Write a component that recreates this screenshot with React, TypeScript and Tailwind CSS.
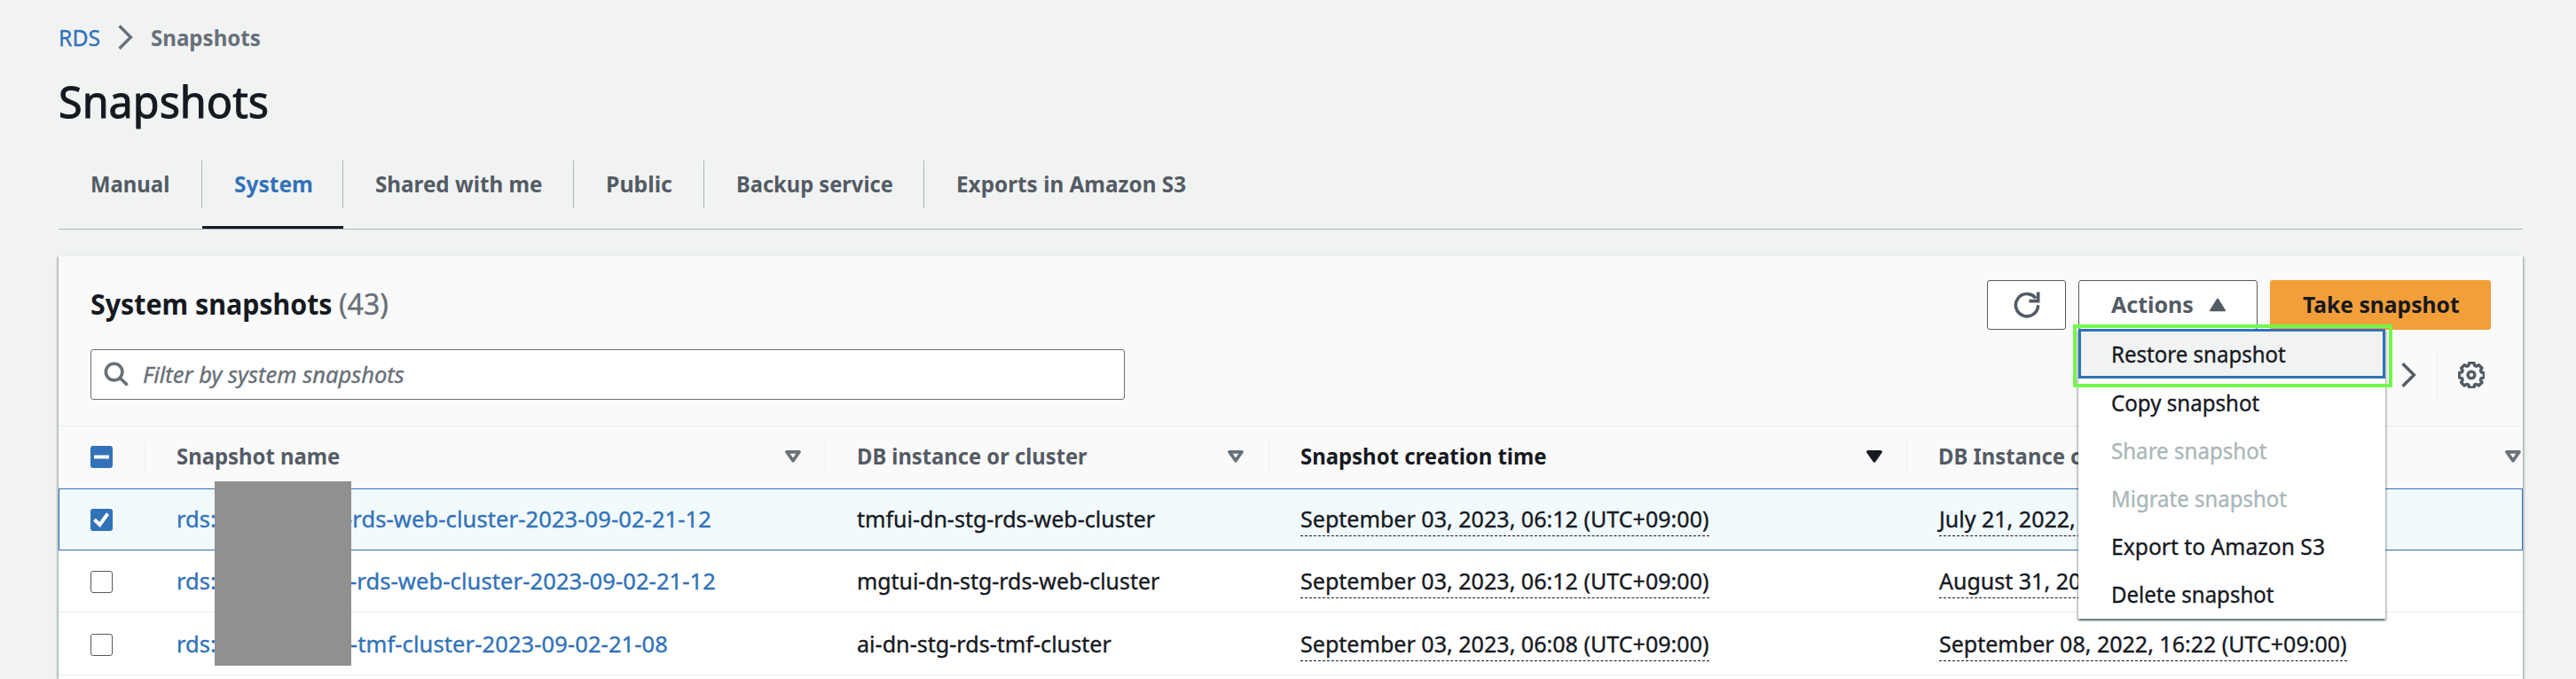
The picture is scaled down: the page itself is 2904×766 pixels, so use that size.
import React from "react";

const columns = [
  { title: "Snapshot name", scale: "scale-x-[0.936]", pad: "pr-[26px]", sorted: false },
  { title: "DB instance or cluster", scale: "scale-x-[0.931]", pad: "pr-[27px]", sorted: false },
  { title: "Snapshot creation time", scale: "scale-x-[0.937]", pad: "pr-[26px]", sorted: true },
  { title: "DB Instance c", scale: "scale-x-[0.935]", pad: "pr-[1px]", sorted: false },
];

const rows = [
  {
    selected: true,
    prefix: "rds:t",
    suffix: "-rds-web-cluster-2023-09-02-21-12",
    suffixWidth: "w-[603px]",
    cluster: "tmfui-dn-stg-rds-web-cluster",
    clusterScale: "scale-x-[0.981]",
    snapshotTime: "September 03, 2023, 06:12 (UTC+09:00)",
    createdTime: "July 21, 2022,",
    createdWidth: "w-[390px]",
    height: "h-[70px]",
  },
  {
    selected: false,
    prefix: "rds:",
    suffix: "-rds-web-cluster-2023-09-02-21-12",
    suffixWidth: "w-[608px]",
    cluster: "mgtui-dn-stg-rds-web-cluster",
    clusterScale: "scale-x-[0.976]",
    snapshotTime: "September 03, 2023, 06:12 (UTC+09:00)",
    createdTime: "August 31, 20",
    createdWidth: "w-[420px]",
    height: "h-[70px] pt-px",
  },
  {
    selected: false,
    prefix: "rds:a",
    suffix: "-tmf-cluster-2023-09-02-21-08",
    suffixWidth: "w-[554px]",
    cluster: "ai-dn-stg-rds-tmf-cluster",
    clusterScale: "scale-x-[0.985]",
    snapshotTime: "September 03, 2023, 06:08 (UTC+09:00)",
    createdTime: "September 08, 2022, 16:22 (UTC+09:00)",
    createdWidth: "w-[460px]",
    height: "h-[71px] pt-[2px]",
  },
];

const tabs = [
  { label: "Manual", width: "w-[162px]", scale: "scale-x-[0.936]" },
  { label: "System", width: "w-[159px]", scale: "scale-x-[0.96]" },
  { label: "Shared with me", width: "w-[260px]", scale: "scale-x-[0.949]" },
  { label: "Public", width: "w-[147px]", scale: "scale-x-[0.974]" },
  { label: "Backup service", width: "w-[248px]", scale: "scale-x-[0.928]" },
  { label: "Exports in Amazon S3", width: "w-[330px]", scale: "scale-x-[0.953]" },
];

const menuItems = [
  { label: "Copy snapshot", scale: "scale-x-[0.945]", disabled: false },
  { label: "Share snapshot", scale: "scale-x-[0.945]", disabled: true },
  { label: "Migrate snapshot", scale: "scale-x-[0.94]", disabled: true },
  { label: "Export to Amazon S3", scale: "scale-x-[0.967]", disabled: false },
  { label: "Delete snapshot", scale: "scale-x-[0.942]", disabled: false },
];

function Chevron({ className = "" }: { className?: string }) {
  return (
    <svg className={`h-[28px] w-[17px] shrink-0 ${className}`} viewBox="0 0 17 28" fill="none" stroke="currentColor" strokeWidth="3.4">
      <path d="M1.6 1.2 14.4 14 1.6 26.8" />
    </svg>
  );
}

function SortIcon({ filled }: { filled: boolean }) {
  return (
    <svg
      className={`h-[16px] w-[20px] shrink-0 ${filled ? "text-[#16191f]" : "text-[#687078]"}`}
      viewBox="0 0 20 16"
      fill={filled ? "currentColor" : "none"}
      stroke="currentColor"
      strokeWidth="3.7"
      strokeLinejoin="round"
    >
      <path d="M3 2.800h14L10 12.800z" />
    </svg>
  );
}

function Checkbox({ state }: { state: "none" | "checked" | "mixed" }) {
  if (state === "none") {
    return <div className="h-[25px] w-[25px] rounded-[3px] border border-[#545b64] bg-white" />;
  }
  return (
    <div className="h-[25px] w-[25px] rounded-[3px] bg-[#3172b9]">
      <svg className="h-full w-full" viewBox="0 0 25 25" fill="none" stroke="white" strokeWidth="4">
        {state === "mixed" ? <path d="M4 12.500h17" /> : <path d="M4.500 12.300 10.500 18 19.500 5.500" />}
      </svg>
    </div>
  );
}

function ActionsMenu() {
  return (
    <div className="absolute top-[55px] left-0 z-10 w-[346px] bg-white pb-[1px] shadow-[0_2px_2px_0_rgba(0,28,36,0.5),2px_2px_2px_0_rgba(0,28,36,0.15),-2px_2px_2px_0_rgba(0,28,36,0.15)]">
      <div className="flex h-[56px] items-center border-[3px] border-[#3172b9] bg-[#f1f3f3] pb-px pl-[34px]">
        <span className="origin-left scale-x-[0.943] whitespace-nowrap">Restore snapshot</span>
      </div>
      <div>
        {menuItems.map((item) => (
          <div key={item.label} className={`flex h-[54px] items-center pb-px pl-[37px] ${item.disabled ? "text-[#aab7b8]" : ""}`}>
            <span className={`origin-left whitespace-nowrap ${item.scale}`}>{item.label}</span>
          </div>
        ))}
      </div>
      <div className="absolute -top-[5px] -left-[6px] h-[71px] w-[360px] border-[4px] border-[#71f84c]" />
    </div>
  );
}

export default function App() {
  return (
    <div className="h-[766px] w-[2904px] overflow-hidden bg-[#f1f3f3] pl-[66px] font-['Noto_Sans',sans-serif] text-[25.5px] leading-[36px] text-[#16191f] [-webkit-text-stroke-width:0.35px] [&_.font-bold]:[-webkit-text-stroke-width:0]">
      <nav className="flex h-[60px] items-end">
        <div className="flex h-[37px] items-center">
          <a className="w-[67px] origin-left scale-x-[0.97] text-[#3172b9]">RDS</a>
          <Chevron className="text-[#687078]" />
          <span className="ml-[20px] origin-left scale-x-[0.944] font-bold text-[#687078]">Snapshots</span>
        </div>
      </nav>

      <h1 className="mt-[24px] h-[60px] text-[48.5px] leading-[60px] font-normal [-webkit-text-stroke-width:1px]">Snapshots</h1>

      <div className="mt-[13px] flex h-[102px] w-[2778px] items-center border-b border-[#aab7b8]">
        {tabs.map((tab, i) => (
          <div key={tab.label} className={`relative flex h-full items-center ${tab.width}`}>
            <div className={`flex h-[54px] w-full items-center pb-px pl-[36px] ${i < tabs.length - 1 ? "border-r border-[#aab7b8]" : ""}`}>
              <span className={`origin-left font-bold whitespace-nowrap ${tab.scale} ${i === 1 ? "text-[#3172b9]" : "text-[#545b64]"}`}>
                {tab.label}
              </span>
            </div>
            {i === 1 && <div className="absolute right-0 bottom-0 left-0 h-[3px] bg-[#16191f]" />}
          </div>
        ))}
      </div>

      <section className="relative mt-[29px] h-[500px] w-[2778px] border-t border-[#eaeded] bg-white shadow-[0_2px_2px_0_rgba(0,28,36,0.3),2px_2px_2px_0_rgba(0,28,36,0.2),-2px_2px_2px_0_rgba(0,28,36,0.2)]">
        <div className="h-[192px] border-b border-[#eaeded] bg-[#fafafa] pt-[27px] pr-[36px] pl-[36px]">
          <div className="flex h-[56px] items-center justify-between">
            <h2 className="flex pb-[3px] text-[32px] leading-[44px]">
              <span className="w-[280px] origin-left scale-x-[0.948] font-bold whitespace-nowrap">System snapshots</span>
              <span className="text-[#687078]">(43)</span>
            </h2>
            <div className="flex gap-[14px]">
              <button className="flex h-[56px] w-[89px] items-center justify-center rounded-[3px] border border-[#545b64] bg-white text-[#545b64]">
                <svg className="h-[32px] w-[32px]" viewBox="0 0 32 32" fill="none" stroke="currentColor" strokeWidth="3.6">
                  <path d="M28.600 16.200A12.600 12.600 0 1 1 26 8.500" />
                  <path d="M28.700 1.600v10H18.500" />
                </svg>
              </button>
              <div className="relative">
                <button className="flex h-[56px] w-[202px] items-center rounded-[3px] border border-[#545b64] bg-white pl-[36px] text-left text-[#545b64]">
                  <span className="w-[110px] origin-left scale-x-[0.98] pb-[2px] font-bold">Actions</span>
                  <svg className="h-[20px] w-[20px]" viewBox="0 0 20 20" fill="currentColor" stroke="currentColor" strokeWidth="2" strokeLinejoin="round">
                    <path d="M10 3.500 18 16.300H2z" />
                  </svg>
                </button>
                <ActionsMenu />
              </div>
              <button className="flex h-[56px] w-[249px] items-center rounded-[3px] bg-[#f29f39] pb-[2px] pl-[37px]">
                <span className="origin-left scale-x-[0.967] font-bold whitespace-nowrap">Take snapshot</span>
              </button>
            </div>
          </div>

          <div className="mt-[22px] flex h-[57px] items-center justify-between">
            <div className="flex h-[57px] w-[1166px] items-center rounded-[3px] border border-[#687078] bg-white pl-[14px] text-[#687078]">
              <svg className="h-[29px] w-[29px]" viewBox="0 0 30 30" fill="none" stroke="currentColor" strokeWidth="3.7">
                <circle cx="12" cy="12" r="9.600" />
                <path d="M18.800 18.800 27.500 27.500" />
              </svg>
              <span className="ml-[15px] pb-px whitespace-nowrap italic">Filter by system snapshots</span>
            </div>
            <div className="flex h-[56px] items-center text-[#545b64]">
              <Chevron />
              <div className="ml-[23px] h-full w-px bg-[#eaeded]" />
              <svg className="mr-[7px] ml-[23px] h-[30px] w-[30px]" viewBox="0.500 0.500 31 31" fill="none" stroke="currentColor" strokeWidth="3.600" strokeLinejoin="round">
                <path d="M13.400 2.600h5.200l.9 3.100 2 .8 2.900-1.500 3.600 3.600-1.500 2.900.8 2 3.100.9v5.200l-3.100.9-.8 2 1.500 2.900-3.600 3.600-2.900-1.500-2 .8-.9 3.100h-5.200l-.9-3.100-2-.8L7.600 29 4 25.400l1.500-2.900-.8-2-3.100-.9v-5.200l3.100-.9.8-2L4 8.600 7.600 5l2.900 1.500 2-.8z" transform="translate(.3 -.7)" />
                <circle cx="16" cy="16" r="4" />
              </svg>
            </div>
          </div>
        </div>

        <div className="grid h-[70px] grid-cols-[97px_767px_500px_719px_695px] items-center bg-[#fafafa]">
          <div className="-mt-px pl-[36px]">
            <Checkbox state="mixed" />
          </div>
          {columns.map((col) => (
            <div key={col.title} className={`-mt-[2px] flex h-[36px] items-center justify-between border-l border-[#eaeded] pl-[35px] ${col.pad}`}>
              <span className={`origin-left pb-[2px] font-bold whitespace-nowrap ${col.scale} ${col.sorted ? "text-[#16191f]" : "text-[#545b64]"}`}>
                {col.title}
              </span>
              <SortIcon filled={col.sorted} />
            </div>
          ))}
        </div>

        {rows.map((row) => (
          <div
            key={row.cluster}
            className={`grid grid-cols-[97px_767px_500px_719px_695px] items-center ${row.height} ${
              row.selected ? "bg-[#f1fafd] shadow-[inset_0_0_0_1px_#3172b9]" : "border-b border-[#eaeded]"
            }`}
          >
            <div className="pl-[36px]">
              <Checkbox state={row.selected ? "checked" : "none"} />
            </div>
            <div className="-mt-[2px] pl-[36px] text-[#3172b9]">
              <div className={`flex justify-between ${row.suffixWidth}`}>
                <span>{row.prefix}</span>
                <span className="whitespace-nowrap tracking-[0.1px]">{row.suffix}</span>
              </div>
            </div>
            <div className="-mt-[2px] pl-[36px]">
              <div className={`origin-left whitespace-nowrap ${row.clusterScale}`}>{row.cluster}</div>
            </div>
            <div className="pl-[36px]">
              <div className="h-[38px] w-[461px] border-b border-dashed border-[#16191f]">
                <div className="origin-left scale-x-[0.983] whitespace-nowrap">{row.snapshotTime}</div>
              </div>
            </div>
            <div className="pl-[37px]">
              <div className={`h-[38px] border-b border-dashed border-[#16191f] ${row.createdWidth}`}>
                <div className="origin-left scale-x-[0.981] whitespace-nowrap">{row.createdTime}</div>
              </div>
            </div>
          </div>
        ))}

        <div className="absolute top-[254px] left-[176px] h-[208px] w-[154px] bg-[#909090]" />
      </section>
    </div>
  );
}
